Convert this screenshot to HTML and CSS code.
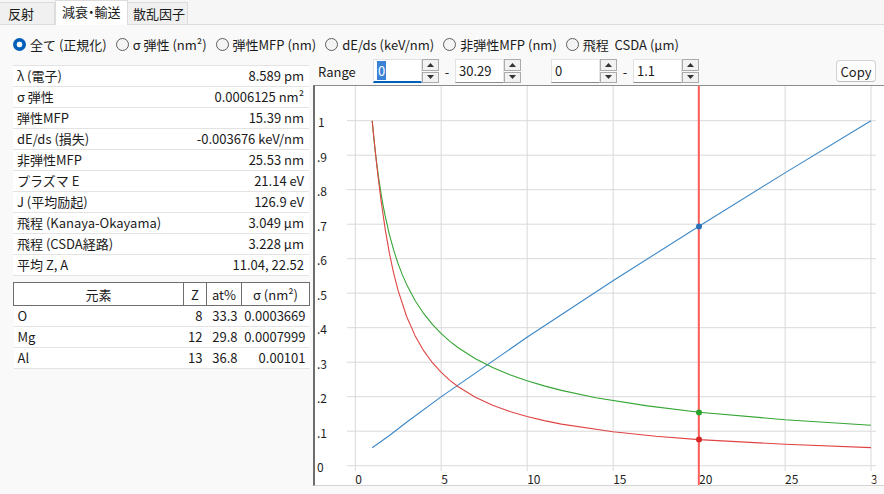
FILE: index.html
```html
<!DOCTYPE html>
<html lang="ja">
<head>
<meta charset="utf-8">
<title>減衰・輸送</title>
<link rel="stylesheet" href="styles.css">
</head>
<body>
<div class="tabs">
  <div class="tab tab-a">反射</div>
  <div class="tab tab-b active">減衰・輸送</div>
  <div class="tab tab-c">散乱因子</div>
</div>

<div class="radios">
  <div class="radio"><span class="rb on"></span>全て (正規化)</div>
  <div class="radio"><span class="rb"></span>σ 弾性 (nm²)</div>
  <div class="radio"><span class="rb"></span>弾性MFP (nm)</div>
  <div class="radio"><span class="rb"></span>dE/ds (keV/nm)</div>
  <div class="radio"><span class="rb"></span>非弾性MFP (nm)</div>
  <div class="radio"><span class="rb"></span>飛程&nbsp; CSDA (μm)</div>
</div>

<div class="main">
  <div class="left">
    <div class="props">
      <div class="row"><span>λ (電子)</span><span>8.589 pm</span></div>
      <div class="row"><span>σ 弾性</span><span>0.0006125 nm²</span></div>
      <div class="row"><span>弾性MFP</span><span>15.39 nm</span></div>
      <div class="row"><span>dE/ds (損失)</span><span>-0.003676 keV/nm</span></div>
      <div class="row"><span>非弾性MFP</span><span>25.53 nm</span></div>
      <div class="row"><span>プラズマ E</span><span>21.14 eV</span></div>
      <div class="row"><span>J (平均励起)</span><span>126.9 eV</span></div>
      <div class="row"><span>飛程 (Kanaya-Okayama)</span><span>3.049 μm</span></div>
      <div class="row"><span>飛程 (CSDA経路)</span><span>3.228 μm</span></div>
      <div class="row"><span>平均 Z, A</span><span>11.04, 22.52</span></div>
    </div>

    <table class="elements">
      <colgroup><col class="c1"><col class="c2"><col class="c3"><col class="c4"></colgroup>
      <thead>
        <tr><th>元素</th><th>Z</th><th>at%</th><th>σ (nm²)</th></tr>
      </thead>
      <tbody>
        <tr><td class="name">O</td><td>8</td><td>33.3</td><td>0.0003669</td></tr>
        <tr><td class="name">Mg</td><td>12</td><td>29.8</td><td>0.0007999</td></tr>
        <tr><td class="name">Al</td><td>13</td><td>36.8</td><td>0.00101</td></tr>
      </tbody>
    </table>
  </div>

  <div class="right">
    <div class="toolbar">
      <span class="range-label">Range</span>
      <div class="spin">
        <div class="field focus"><span class="sel">0</span></div>
        <div class="btns">
          <div class="btn"><svg width="7" height="4" viewBox="0 0 7 4"><path d="M0 4 L3.5 0 L7 4 Z" fill="#333"/></svg></div>
          <div class="btn"><svg width="7" height="4" viewBox="0 0 7 4"><path d="M0 0 L3.5 4 L7 0 Z" fill="#333"/></svg></div>
        </div>
      </div>
      <span class="dash">-</span>
      <div class="spin">
        <div class="field">30.29</div>
        <div class="btns">
          <div class="btn"><svg width="7" height="4" viewBox="0 0 7 4"><path d="M0 4 L3.5 0 L7 4 Z" fill="#333"/></svg></div>
          <div class="btn"><svg width="7" height="4" viewBox="0 0 7 4"><path d="M0 0 L3.5 4 L7 0 Z" fill="#333"/></svg></div>
        </div>
      </div>
      <div class="spin spin-gap">
        <div class="field">0</div>
        <div class="btns">
          <div class="btn"><svg width="7" height="4" viewBox="0 0 7 4"><path d="M0 4 L3.5 0 L7 4 Z" fill="#333"/></svg></div>
          <div class="btn"><svg width="7" height="4" viewBox="0 0 7 4"><path d="M0 0 L3.5 4 L7 0 Z" fill="#333"/></svg></div>
        </div>
      </div>
      <span class="dash">-</span>
      <div class="spin">
        <div class="field">1.1</div>
        <div class="btns">
          <div class="btn"><svg width="7" height="4" viewBox="0 0 7 4"><path d="M0 4 L3.5 0 L7 4 Z" fill="#333"/></svg></div>
          <div class="btn"><svg width="7" height="4" viewBox="0 0 7 4"><path d="M0 0 L3.5 4 L7 0 Z" fill="#333"/></svg></div>
        </div>
      </div>
      <button class="copy">Copy</button>
    </div>

    <div class="chart">
      <svg class="plot" width="569" height="399" viewBox="315 86 569 399">
        <defs>
          <clipPath id="plotclip"><rect x="315" y="86" width="561.5" height="399"/></clipPath>
        </defs>
        <g class="grid">
          <line x1="347" y1="465.7" x2="876" y2="465.7"/>
          <line x1="347" y1="431.2" x2="876" y2="431.2"/>
          <line x1="347" y1="396.7" x2="876" y2="396.7"/>
          <line x1="347" y1="362.2" x2="876" y2="362.2"/>
          <line x1="347" y1="327.7" x2="876" y2="327.7"/>
          <line x1="347" y1="293.2" x2="876" y2="293.2"/>
          <line x1="347" y1="258.7" x2="876" y2="258.7"/>
          <line x1="347" y1="224.2" x2="876" y2="224.2"/>
          <line x1="347" y1="189.7" x2="876" y2="189.7"/>
          <line x1="347" y1="155.2" x2="876" y2="155.2"/>
          <line x1="347" y1="120.7" x2="876" y2="120.7"/>
          <line x1="355.3" y1="86" x2="355.3" y2="471"/>
          <line x1="441.2" y1="86" x2="441.2" y2="471"/>
          <line x1="527.2" y1="86" x2="527.2" y2="471"/>
          <line x1="613.2" y1="86" x2="613.2" y2="471"/>
          <line x1="699.1" y1="86" x2="699.1" y2="471"/>
          <line x1="785.1" y1="86" x2="785.1" y2="471"/>
          <line x1="871" y1="86" x2="871" y2="471"/>
        </g>
        <g class="axis">
          <text x="318" y="127">1</text>
          <text x="317" y="161.5">.9</text>
          <text x="317" y="196">.8</text>
          <text x="317" y="230.5">.7</text>
          <text x="317" y="265">.6</text>
          <text x="317" y="299.5">.5</text>
          <text x="317" y="334">.4</text>
          <text x="317" y="368.5">.3</text>
          <text x="317" y="403">.2</text>
          <text x="317" y="437.5">.1</text>
          <text x="317" y="472">0</text>
        </g>
        <g class="axis" clip-path="url(#plotclip)">
          <text x="355.3" y="483.5">0</text>
          <text x="441.2" y="483.5">5</text>
          <text x="527.2" y="483.5">10</text>
          <text x="613.2" y="483.5">15</text>
          <text x="699.1" y="483.5">20</text>
          <text x="785.1" y="483.5">25</text>
          <text x="871" y="483.5">30</text>
        </g>
        <polyline class="c-blue" points="372.2,447.8 389.4,435.5 406.6,422.3 441,396.9 527,337.3 613,280.8 699,226.2 785,172.9 871,120.7"/>
        <polyline class="c-green" points="372.2,120.7 373.06,130.1 373.9,138.8 374.78,147 376.5,161.9 378.65,178.1 380.8,192.2 382.95,204.6 385.1,215.7 389.4,234.6 393.7,250.2 398,263.4 402.3,274.65 406.6,284.4 415.2,300.7 423.8,313.7 432.4,324.4 441,333.4 449.6,341.1 458.2,347.8 475.4,358.7 492.6,367.5 509.8,374.7 527,380.8 544.2,385.9 561.4,390.4 595.8,397.7 647.4,405.9 699,412.2 785,419.7 871,425.2"/>
        <polyline class="c-red" points="372.2,120.7 373.9,137.8 375.6,154.5 378.2,177.8 380.8,198.8 385.1,228.7 389.4,253.2 393.7,273.4 398,290.2 406.6,316.5 415.2,335.9 423.8,350.9 432.4,362.7 441,372.2 449.6,380.1 458.2,386.8 475.4,397.3 492.6,405.2 509.8,411.5 527,416.5 544.2,420.6 561.4,424.1 613,431.8 655.8,436.2 699,439.6 785,444.3 871,447.6"/>
        <line class="cursor" x1="698.8" y1="86" x2="698.8" y2="485"/>
        <circle class="d-blue" cx="699" cy="226.5" r="3"/>
        <circle class="d-green" cx="699" cy="412.5" r="3"/>
        <circle class="d-red" cx="699" cy="439.5" r="3"/>
      </svg>
    </div>
  </div>
</div>
</body>
</html>
```

FILE: styles.css
```css
* { box-sizing: border-box; }

html, body { margin: 0; padding: 0; }

body {
  width: 884px;
  height: 494px;
  overflow: hidden;
  background: #f9f9f9;
  font-family: "Noto Sans CJK JP", "Noto Sans", sans-serif;
  font-size: 13px;
  color: #1b1b1b;
}

/* ---------- tabs ---------- */
.tabs {
  display: flex;
  align-items: flex-end;
  height: 25px;
  border-bottom: 1px solid #dcdcdc;
  background: #f6f6f6;
}
.tab {
  height: 22px;
  line-height: 21px;
  background: #f0f0f0;
  border: 1px solid #dcdcdc;
  border-bottom: none;
  white-space: nowrap;
}
.tab-a { width: 55px; padding-left: 8px; border-left: none; }
.tab-b { width: 73px; padding-left: 6px; font-feature-settings: "halt"; }
.tab-c { width: 60px; padding-left: 5px; border-left: none; }
.tab.active {
  height: 25px;
  line-height: 22px;
  background: #fff;
  margin-bottom: -1px;
}

/* ---------- radio row ---------- */
.radios {
  display: flex;
  align-items: center;
  height: 20px;
  margin-top: 9px;
  padding-left: 13px;
  gap: 9px;
  white-space: nowrap;
}
.radio { display: flex; align-items: center; }
.rb {
  width: 13px;
  height: 13px;
  border-radius: 50%;
  border: 1px solid #5e5e5e;
  background: #f4f4f4;
  margin-right: 4px;
  flex: none;
}
.rb.on {
  border: none;
  background: radial-gradient(circle, #ffffff 0 2.6px, #005fb8 3.2px);
}

/* ---------- main ---------- */
.main {
  display: flex;
  margin-top: 3px;
}
.left {
  width: 296px;
  margin-left: 13px;
  padding-top: 8px;
  flex: none;
}
.props { border-top: 1px solid #e3e3e3; }
.row {
  display: flex;
  justify-content: space-between;
  height: 21px;
  line-height: 20px;
  padding: 0 5px 0 4px;
  background: #fff;
  border-bottom: 1px solid #e3e3e3;
  white-space: nowrap;
}

.elements {
  margin-top: 6px;
  width: 296px;
  border-collapse: collapse;
  table-layout: fixed;
  font-size: 13px;
}
.elements .c1 { width: 170px; }
.elements .c2 { width: 23px; }
.elements .c3 { width: 35px; }
.elements .c4 { width: 68px; }
.elements th {
  height: 23px;
  padding: 0;
  font-weight: normal;
  text-align: center;
  background: #fff;
  border: 1px solid #6e6e6e;
  white-space: nowrap;
}
.elements td {
  height: 21px;
  padding: 0 4px 0 0;
  line-height: 20px;
  text-align: right;
  background: #fff;
  border-bottom: 1px solid #e3e3e3;
  white-space: nowrap;
}
.elements td.name { text-align: left; padding: 0 0 0 4px; }

/* ---------- right ---------- */
.right {
  width: 571px;
  margin-left: 4px;
  flex: none;
}
.toolbar {
  display: flex;
  align-items: center;
  height: 28px;
  padding-left: 5px;
}
.range-label { width: 55px; flex: none; }
.spin { display: flex; height: 24px; flex: none; }
.spin-gap { margin-left: 30px; }
.field {
  width: 49px;
  height: 24px;
  background: #fff;
  border: 1px solid #e3e3e3;
  border-bottom: 1px solid #8a8a8a;
  padding-left: 3px;
  line-height: 22px;
  white-space: nowrap;
}
.field.focus { border-bottom: 2px solid #005fb8; }
.sel { background: #3b82d6; color: #fff; padding: 0 1px; }
.btns {
  width: 17px;
  display: flex;
  flex-direction: column;
  gap: 1px;
}
.btn {
  height: 11.5px;
  background: #f2f2f2;
  border: 1px solid #ababab;
  display: flex;
  align-items: center;
  justify-content: center;
}
.btn svg { display: block; }
.dash { width: 16px; text-align: center; flex: none; }
.copy {
  margin-left: auto;
  margin-right: 8px;
  width: 40px;
  height: 22px;
  padding: 0;
  font-family: inherit;
  font-size: 13px;
  color: #1b1b1b;
  background: #fdfdfd;
  border: 1px solid #d3d3d3;
  border-bottom-color: #bdbdbd;
  border-radius: 4px;
}

.chart {
  height: 401px;
  background: #fff;
  border-left: 2px solid #6e6e6e;
  border-top: 1px solid #8c8c8c;
  border-bottom: 1px solid #d4d4d4;
}
.plot { display: block; }
.grid line { stroke: #d9d9d9; stroke-width: 1; }
.axis text {
  font-family: "Noto Sans CJK JP", "Noto Sans", sans-serif;
  font-size: 12px;
  fill: #1e1e1e;
}
.c-blue, .c-green, .c-red {
  fill: none;
  stroke-width: 1.1;
  stroke-linejoin: round;
}
.c-blue { stroke: #3b87c7; }
.c-green { stroke: #35a535; }
.c-red { stroke: #e04444; }
.cursor { stroke: #ff5c5c; stroke-width: 2; }
.d-blue { fill: #2a72b8; }
.d-green { fill: #2ca02c; }
.d-red { fill: #d62728; }
```
